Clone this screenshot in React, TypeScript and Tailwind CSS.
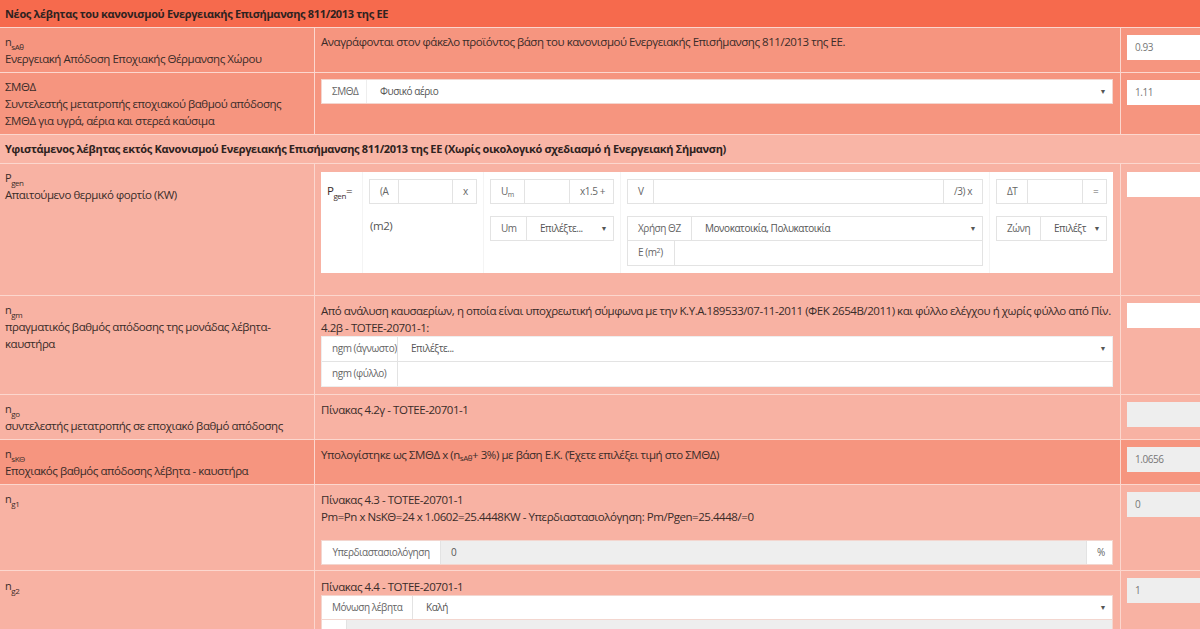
import React from 'react';

// --- tones ---
const DARK = 'bg-[#f6957f]';
const LIGHT = 'bg-[#f8b2a3]';

function Sym({ base, sub }: { base: string; sub: string }) {
  return (
    <span>
      {base}
      <sub className="text-[8px] leading-none align-[-2px]">{sub}</sub>
    </span>
  );
}

function Row({
  tone,
  label,
  children,
  right,
}: {
  tone: string;
  label: React.ReactNode;
  children: React.ReactNode;
  right?: React.ReactNode;
}) {
  return (
    <div className={`flex border-b border-[#fcd7ce] ${tone}`}>
      <div className="w-[315px] shrink-0 border-r border-[#fcd7ce] py-[5px] pl-[5px] pr-[25px]">{label}</div>
      <div className="min-w-0 flex-1 border-r border-[#fcd7ce] py-[5px] pl-[6px] pr-[7px]">{children}</div>
      <div className="w-[79px] shrink-0 overflow-hidden py-[5px] pl-[6px]">{right}</div>
    </div>
  );
}

function Value({ v, disabled }: { v?: string; disabled?: boolean }) {
  return (
    <div
      className={`mt-[2px] h-[25px] w-[100px] px-[8px] text-[10px] leading-[25px] text-[#777] ${
        disabled ? 'bg-[#eeeeee]' : 'bg-white'
      }`}
    >
      {v}
    </div>
  );
}

function Addon({ children, w, className = '' }: { children?: React.ReactNode; w?: string; className?: string }) {
  return (
    <div
      className={`shrink-0 whitespace-nowrap bg-white px-[10px] text-center text-[10px] leading-[23px] text-[#666] ${w ?? ''} ${className}`}
    >
      {children}
    </div>
  );
}

function Arrow() {
  return <span className="absolute right-[6px] top-0 text-[7px] leading-[23px] text-[#555]">▼</span>;
}

function SelectBox({ text, className = '' }: { text: string; className?: string }) {
  return (
    <div
      className={`relative min-w-0 flex-1 whitespace-nowrap border-l border-[#e3e3e3] bg-white pl-[13px] text-[10px] leading-[23px] text-[#555] ${className}`}
    >
      {text}
      <Arrow />
    </div>
  );
}

function Blank({ gray, className = '' }: { gray?: boolean; className?: string }) {
  return <div className={`min-w-0 flex-1 border-l border-[#e3e3e3] ${gray ? 'bg-[#eeeeee]' : 'bg-white'} ${className}`} />;
}

function Group({ children, className = '' }: { children: React.ReactNode; className?: string }) {
  return <div className={`flex h-[25px] border border-[#e3e3e3] bg-white ${className}`}>{children}</div>;
}

function SymLine({ base, sub }: { base: string; sub: string }) {
  return (
    <div className="h-[17px] text-[11px]">
      <Sym base={base} sub={sub} />
    </div>
  );
}

export default function App() {
  return (
    <div className="h-[629px] w-[1200px] overflow-hidden bg-[#f8b2a3] font-['Open_Sans',sans-serif] text-[11.5px] leading-[17px] tracking-[-0.45px] text-[#3a2c29]">
      {/* top heading */}
      <div className="h-[28px] border-b border-[#fcd7ce] bg-[#f66a4d] px-[5px] text-[11px] font-bold leading-[27px] tracking-[-0.33px] text-[#2e2220]">
        Νέος λέβητας του κανονισμού Ενεργειακής Επισήμανσης 811/2013 της ΕΕ
      </div>

      <Row
        tone={DARK}
        label={
          <>
            <SymLine base="n" sub="sAθ" />
            <div>Ενεργειακή Απόδοση Εποχιακής Θέρμανσης Χώρου</div>
          </>
        }
        right={<Value v="0.93" />}
      >
        <div>Αναγράφονται στον φάκελο προϊόντος βάση του κανονισμού Ενεργειακής Επισήμανσης 811/2013 της ΕΕ.</div>
      </Row>

      <Row
        tone={DARK}
        label={
          <>
            <div>ΣΜΘΔ</div>
            <div className="whitespace-nowrap">Συντελεστής μετατροπής εποχιακού βαθμού απόδοσης</div>
            <div>ΣΜΘΔ για υγρά, αέρια και στερεά καύσιμα</div>
          </>
        }
        right={<Value v="1.11" />}
      >
        <Group className="mt-[1px] border-[#f3d6cf]">
          <Addon w="w-[44px]" className="px-0">ΣΜΘΔ</Addon>
          <SelectBox text="Φυσικό αέριο" className="border-[#eee]" />
        </Group>
      </Row>

      <div className="h-[29px] border-b border-[#fcd7ce] bg-[#f9b5a6] px-[5px] text-[11px] font-bold leading-[28px] tracking-[-0.33px] text-[#2e2220]">
        Υφιστάμενος λέβητας εκτός Κανονισμού Ενεργειακής Επισήμανσης 811/2013 της ΕΕ (Χωρίς οικολογικό σχεδιασμό ή Ενεργειακή Σήμανση)
      </div>

      <Row
        tone={LIGHT}
        label={
          <>
            <SymLine base="P" sub="gen" />
            <div>Απαιτούμενο θερμικό φορτίο (KW)</div>
          </>
        }
        right={<div className="pt-[1px]"><Value /></div>}
      >
        <div className="mb-[17px] mt-[3px] grid h-[101px] grid-cols-[41px_121px_137px_369px_124px] bg-white text-[10px] text-[#555]">
          <div className="whitespace-nowrap px-[6px] pt-[10px] text-[11.5px] text-[#3a2c29]">
            <Sym base="P" sub="gen" />=
          </div>
          <div className="border-l border-[#f4f4f4] px-[6px] pt-[7px]">
            <Group>
              <Addon w="w-[28px]" className="px-[6px] text-left">(A</Addon>
              <Blank />
              <Addon w="w-[24px]" className="border-l border-[#e3e3e3] px-0">x</Addon>
            </Group>
            <div className="mt-[13px] pl-[1px] text-[11.5px] text-[#555]">(m2)</div>
          </div>
          <div className="border-l border-[#f4f4f4] px-[6px] pt-[7px]">
            <Group>
              <Addon w="w-[33px]" className="px-[6px] text-left">
                U<sub className="text-[7px] leading-none">m</sub>
              </Addon>
              <Blank />
              <Addon w="w-[44px]" className="border-l border-[#e3e3e3] px-0">x1.5 +</Addon>
            </Group>
            <Group className="mt-[12px]">
              <Addon w="w-[35px]" className="px-[6px] text-left">Um</Addon>
              <SelectBox text="Επιλέξτε..." />
            </Group>
          </div>
          <div className="border-l border-[#f4f4f4] px-[6px] pt-[7px]">
            <Group>
              <Addon w="w-[25px]" className="px-[6px] text-left">V</Addon>
              <Blank />
              <Addon w="w-[39px]" className="border-l border-[#e3e3e3] px-0">/3) x</Addon>
            </Group>
            <Group className="mt-[12px]">
              <Addon w="w-[63px]" className="px-[8px] text-left">Χρήση ΘΖ</Addon>
              <SelectBox text="Μονοκατοικία, Πολυκατοικία" />
            </Group>
            <Group className="border-t-0">
              <Addon w="w-[46px]" className="px-[8px] text-left">
                E (m<sup className="text-[7px] leading-none">2</sup>)
              </Addon>
              <Blank />
            </Group>
          </div>
          <div className="border-l border-[#f4f4f4] px-[6px] pt-[7px]">
            <Group>
              <Addon w="w-[30px]" className="px-[8px] text-left">ΔT</Addon>
              <Blank />
              <Addon w="w-[24px]" className="border-l border-[#e3e3e3] px-0">=</Addon>
            </Group>
            <Group className="mt-[12px]">
              <Addon w="w-[43px]" className="px-[8px] text-left">Ζώνη</Addon>
              <SelectBox text="Επιλέξτ" className="pl-[9px]" />
            </Group>
          </div>
        </div>
      </Row>

      <Row
        tone={LIGHT}
        label={
          <>
            <SymLine base="n" sub="gm" />
            <div>πραγματικός βαθμός απόδοσης της μονάδας λέβητα-καυστήρα</div>
          </>
        }
        right={<Value />}
      >
        <div className="pt-[1px]">
          Από ανάλυση καυσαερίων, η οποία είναι υποχρεωτική σύμφωνα με την Κ.Υ.Α.189533/07-11-2011 (ΦΕΚ 2654Β/2011) και φύλλο ελέγχου ή χωρίς φύλλο από Πίν. 4.2β - ΤΟΤΕΕ-20701-1:
        </div>
        <div className="mb-[2px] border border-[#eee] bg-white">
          <div className="flex h-[25px] border-b border-[#e3e3e3]">
            <Addon w="w-[75px]" className="px-[5px] text-left">ngm (άγνωστο)</Addon>
            <SelectBox text="Επιλέξτε..." />
          </div>
          <div className="flex h-[24px]">
            <Addon w="w-[75px]" className="px-[7px] text-left">ngm (φύλλο)</Addon>
            <Blank />
          </div>
        </div>
      </Row>

      <Row
        tone={LIGHT}
        label={
          <>
            <SymLine base="n" sub="go" />
            <div>συντελεστής μετατροπής σε εποχιακό βαθμό απόδοσης</div>
          </>
        }
        right={<Value disabled />}
      >
        <div className="pt-[1px]">Πίνακας 4.2γ - ΤΟΤΕΕ-20701-1</div>
      </Row>

      <Row
        tone={DARK}
        label={
          <>
            <SymLine base="n" sub="sKΘ" />
            <div>Εποχιακός βαθμός απόδοσης λέβητα - καυστήρα</div>
          </>
        }
        right={<Value v="1.0656" disabled />}
      >
        <div className="pt-[1px]">
          Υπολογίστηκε ως ΣΜΘΔ x (n<sub className="text-[8px] leading-none">sAθ</sub>+ 3%) με βάση Ε.Κ. (Έχετε επιλέξει τιμή στο ΣΜΘΔ)
        </div>
      </Row>

      <Row tone={LIGHT} label={<SymLine base="n" sub="g1" />} right={<Value v="0" disabled />}>
        <div className="pt-[1px]">Πίνακας 4.3 - ΤΟΤΕΕ-20701-1</div>
        <div>Pm=Pn x NsKΘ=24 x 1.0602=25.4448KW - Υπερδιαστασιολόγηση: Pm/Pgen=25.4448/=0</div>
        <Group className="mt-[15px] border-[#f3d6cf]">
          <Addon w="w-[118px]" className="px-0">Υπερδιαστασιολόγηση</Addon>
          <div className="flex-1 border-l border-[#e3e3e3] bg-[#eeeeee] pl-[10px] text-[10px] leading-[23px] text-[#555]">0</div>
          <Addon w="w-[26px]" className="border-l border-[#e3e3e3] px-0">%</Addon>
        </Group>
      </Row>

      <Row tone={LIGHT} label={<div className="pt-[1px]"><SymLine base="n" sub="g2" /></div>} right={<Value v="1" disabled />}>
        <div className="pt-[2px]">Πίνακας 4.4 - ΤΟΤΕΕ-20701-1</div>
        <Group className="border-[#f3d6cf]">
          <Addon w="w-[90px]" className="px-0">Μόνωση λέβητα</Addon>
          <SelectBox text="Καλή" className="pl-[12px]" />
        </Group>
        <Group className="border-t-0 border-[#f3d6cf]">
          <Addon w="w-[24px]" />
          <Blank gray />
        </Group>
      </Row>
    </div>
  );
}
